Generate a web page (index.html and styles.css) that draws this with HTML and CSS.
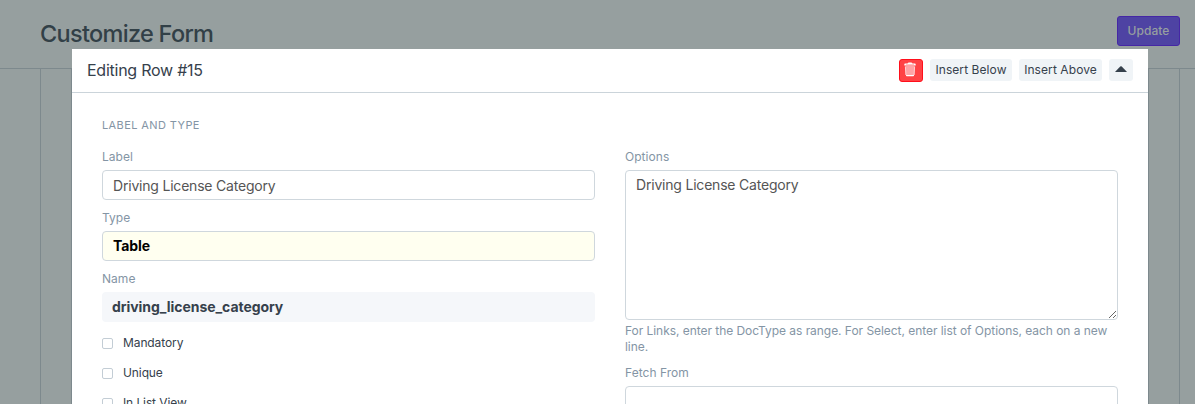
FILE: index.html
```html
<!DOCTYPE html>
<html lang="en">
<head>
<meta charset="utf-8">
<title>Customize Form</title>
<link rel="stylesheet" href="styles.css">
</head>
<body>
<div class="page">
  <header class="page-head">
    <h1 class="page-title">Customize Form</h1>
    <button class="update">Update</button>
  </header>
  <div class="page-body"><div class="layout"><div class="grid-frame"></div></div></div>
</div>
<section class="modal">
  <header class="modal-head">
    <h2 class="modal-title">Editing Row #15</h2>
    <div class="actions">
      <button class="btn danger" aria-label="Delete">
        <svg width="12" height="15" viewBox="0 0 12 15"><path d="M1.500 4h9l-.4 9H1.900z" fill="#ffa3a6"/><path d="M1.400 4.500l.5 8.500M10.600 4.500l-.5 8.500" fill="none" stroke="#ffd0d2" stroke-width="1"/><path d="M.3 3.600V2.400q0-.8.8-.8h2.400Q3.900.5 5 .5h2q1.100 0 1.500 1.100h2.400q.8 0 .8.8v1.200zM2 12.900h8v.5q0 .8-.8.8H2.800q-.8 0-.8-.8z" fill="#fff"/><path d="M2 2.600h8" stroke="#ff8a8d" stroke-width=".6"/></svg>
      </button>
      <button class="btn below">Insert Below</button>
      <button class="btn above">Insert Above</button>
      <button class="btn collapse" aria-label="Collapse"><svg width="12" height="6" viewBox="0 0 12 6"><path d="M0 6 5.200.5Q6-.2 6.800.5L12 6z" fill="#36414c"/></svg></button>
    </div>
  </header>
  <div class="modal-body">
    <h3 class="section-title">LABEL AND TYPE</h3>
    <div class="columns">
      <div class="column">
        <div class="field"><label class="label">Label</label><div class="control">Driving License Category</div></div>
        <div class="field"><label class="label">Type</label><div class="control required">Table</div></div>
        <div class="field"><label class="label">Name</label><div class="control readonly">driving_license_category</div></div>
        <div class="checks">
          <label class="check"><span class="box"></span><span>Mandatory</span></label>
          <label class="check"><span class="box"></span><span>Unique</span></label>
          <label class="check"><span class="box"></span><span>In List View</span></label>
        </div>
      </div>
      <div class="column">
        <div class="field options">
          <label class="label">Options</label>
          <textarea class="control area">Driving License Category</textarea>
          <p class="help">For Links, enter the DocType as range. For Select, enter list of Options, each on a new line.</p>
        </div>
        <div class="field"><label class="label">Fetch From</label><div class="control"></div></div>
      </div>
    </div>
  </div>
</section>
</body>
</html>
```
FILE: styles.css
```css
* { box-sizing: border-box; }
body { margin: 0; height: 404px; overflow: hidden; position: relative; background: #969f9f; color: #36414c; font-family: Inter, "Liberation Sans", sans-serif; }
h1, h2, h3, p { margin: 0; }
button { font: inherit; color: inherit; margin: 0; padding: 0; border: 0; }
svg { display: block; }
.page-head { height: 69px; border-bottom: 1px solid #7d898d; display: flex; justify-content: space-between; align-items: flex-start; padding: 16px 15px 0 40px; }
.page-title { font-size: 23.5px; line-height: 36px; font-weight: 500; letter-spacing: -.7px; color: #324047; }
.update { width: 63px; height: 30px; padding-bottom: 2px; border: 1px solid #4527a5; border-radius: 3px; background: #4e43a3; color: #969f9f; font-size: 12px; font-weight: 500; letter-spacing: .05px; }
.page-body { padding: 0 15px 0 40px; }
.layout { height: 335px; border: solid #7d898d; border-width: 0 1px; padding: 0 30px; }
.grid-frame { height: 335px; border: solid #7d898d; border-width: 0 1px; }
.modal { position: absolute; left: 72px; top: 49px; width: 1076px; height: 355px; overflow: hidden; background: #fff; }
.modal-head { height: 44px; border-bottom: 1px solid #cbd4da; padding: 0 15px; display: flex; justify-content: space-between; }
.modal-title { font-size: 16px; line-height: 43px; font-weight: 400; letter-spacing: -.25px; }
.actions { display: flex; gap: 7px; padding-top: 10px; }
.btn { height: 22px; border-radius: 3px; background: #f0f4f7; font-size: 12px; line-height: 22px; display: flex; align-items: center; justify-content: center; white-space: nowrap; }
.danger { width: 24px; height: 23px; padding: 0 2px 2px 0; border: 1px solid #ff0f1b; background: #ff4245; }
.below { width: 82px; letter-spacing: .08px; }
.above { width: 83px; letter-spacing: .08px; }
.collapse { width: 24px; padding-bottom: 2px; }
.modal-body { padding: 24px 30px 0; }
.section-title { font-size: 11px; line-height: 16px; font-weight: 400; letter-spacing: .4px; color: #8495a5; margin-bottom: 15px; }
.columns { display: grid; grid-template-columns: 493px 493px; gap: 30px; }
.field { margin-bottom: 9px; }
.label { display: block; font-size: 12px; line-height: 18px; height: 22px; color: #8495a5; letter-spacing: .04px; }
.control { height: 30px; border: 1px solid #cfd7dd; border-radius: 4px; padding: 0 10px; font-size: 14px; line-height: 30px; color: #555; background: #fff; letter-spacing: -.2px; }
.required { background: #fffff0; color: #000; font-weight: 700; line-height: 28px; letter-spacing: -.1px; }
.readonly { border: 0; background: #f5f7fa; color: #36414c; font-weight: 700; letter-spacing: -.06px; }
.area { display: block; width: 493px; height: 150px; padding: 4px 10px; line-height: 20px; font-family: inherit; resize: vertical; outline: 0; }
.help { font-size: 12px; line-height: 16px; padding-top: 3px; color: #8495a5; letter-spacing: -.045px; }
.checks { display: flex; flex-direction: column; gap: 12px; padding-top: 3px; }
.check { display: flex; align-items: center; gap: 10px; height: 18px; font-size: 12px; line-height: 18px; letter-spacing: -.1px; }
.box { width: 11px; height: 11px; border: 1px solid #c3cdd5; border-radius: 2px; }
```
